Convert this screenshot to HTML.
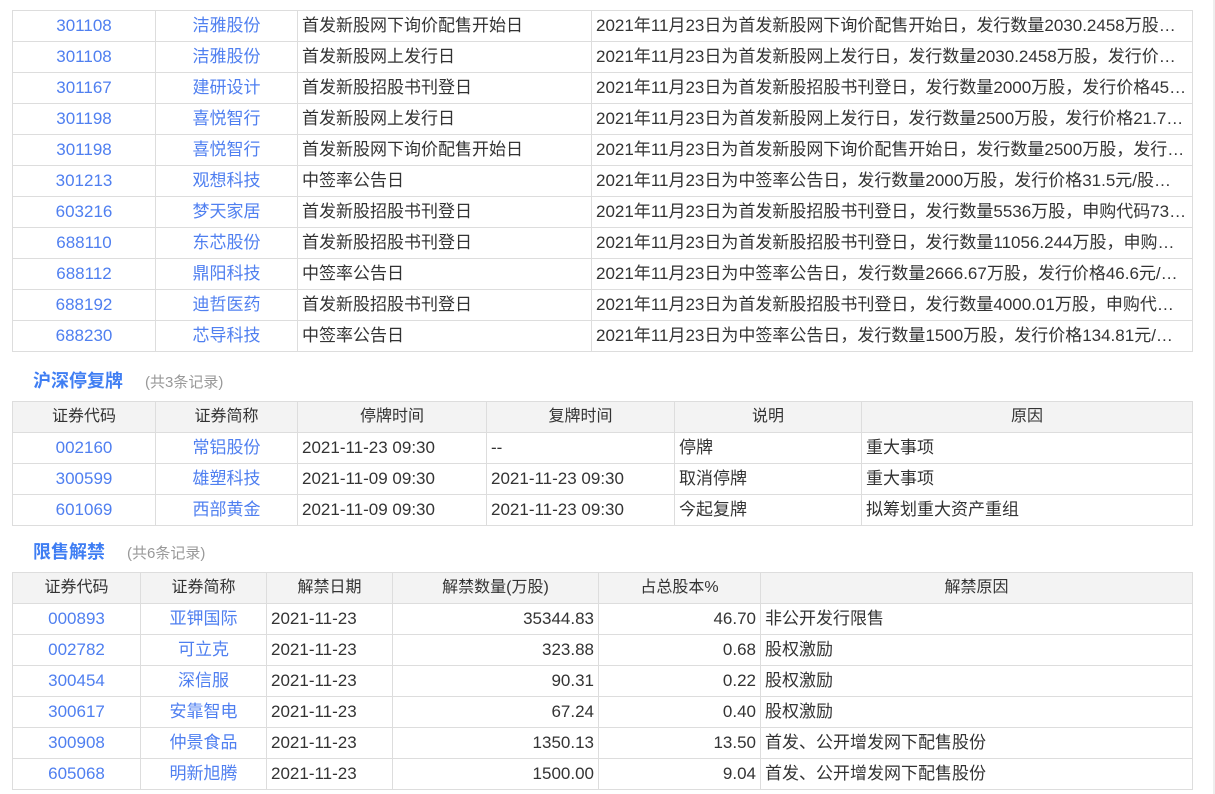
<!DOCTYPE html>
<html><head><meta charset="utf-8"><style>
body{margin:0;background:#fff;font-family:"Liberation Sans","Noto Sans CJK SC",sans-serif;font-size:17px;color:#333;width:1215px;height:794px;overflow:hidden;position:relative}
table{position:absolute;left:12px;border-collapse:collapse;table-layout:fixed;width:1181px}
td,th{border:1px solid #ddd;height:30px;line-height:30px;padding:0 4px;white-space:nowrap;overflow:hidden;text-overflow:ellipsis;font-weight:normal;vertical-align:middle}
th{background:#f3f3f3;color:#333;font-size:16px}
.c{text-align:center}.r{text-align:right}
.a{color:#4f7ff0;text-align:center}
.t{position:absolute;left:33px;font-size:18px;font-weight:bold;color:#3f7ef3}
.t span{font-size:15px;font-weight:normal;color:#999;margin-left:22px}
.edge{position:absolute;right:0;top:0;width:2px;height:794px;background:#eee}
</style></head><body>
<table style="top:10px">
<colgroup><col style="width:143px"><col style="width:142px"><col style="width:294px"><col></colgroup>
<tr><td class="a">301108</td><td class="a">洁雅股份</td><td>首发新股网下询价配售开始日</td><td>2021年11月23日为首发新股网下询价配售开始日，发行数量2030.2458万股，发行价格46.30元</td></tr>
<tr><td class="a">301108</td><td class="a">洁雅股份</td><td>首发新股网上发行日</td><td>2021年11月23日为首发新股网上发行日，发行数量2030.2458万股，发行价格46.30元</td></tr>
<tr><td class="a">301167</td><td class="a">建研设计</td><td>首发新股招股书刊登日</td><td>2021年11月23日为首发新股招股书刊登日，发行数量2000万股，发行价格45.60元</td></tr>
<tr><td class="a">301198</td><td class="a">喜悦智行</td><td>首发新股网上发行日</td><td>2021年11月23日为首发新股网上发行日，发行数量2500万股，发行价格21.73元/股</td></tr>
<tr><td class="a">301198</td><td class="a">喜悦智行</td><td>首发新股网下询价配售开始日</td><td>2021年11月23日为首发新股网下询价配售开始日，发行数量2500万股，发行价格21.73元</td></tr>
<tr><td class="a">301213</td><td class="a">观想科技</td><td>中签率公告日</td><td>2021年11月23日为中签率公告日，发行数量2000万股，发行价格31.5元/股，中签率</td></tr>
<tr><td class="a">603216</td><td class="a">梦天家居</td><td>首发新股招股书刊登日</td><td>2021年11月23日为首发新股招股书刊登日，发行数量5536万股，申购代码732216</td></tr>
<tr><td class="a">688110</td><td class="a">东芯股份</td><td>首发新股招股书刊登日</td><td>2021年11月23日为首发新股招股书刊登日，发行数量11056.244万股，申购代码787110</td></tr>
<tr><td class="a">688112</td><td class="a">鼎阳科技</td><td>中签率公告日</td><td>2021年11月23日为中签率公告日，发行数量2666.67万股，发行价格46.6元/股，中签率</td></tr>
<tr><td class="a">688192</td><td class="a">迪哲医药</td><td>首发新股招股书刊登日</td><td>2021年11月23日为首发新股招股书刊登日，发行数量4000.01万股，申购代码787192</td></tr>
<tr><td class="a">688230</td><td class="a">芯导科技</td><td>中签率公告日</td><td>2021年11月23日为中签率公告日，发行数量1500万股，发行价格134.81元/股，中签率</td></tr>
</table>
<div class="t" style="top:367px">沪深停复牌<span>(共3条记录)</span></div>
<table style="top:401px">
<colgroup><col style="width:143px"><col style="width:142px"><col style="width:189px"><col style="width:188px"><col style="width:187px"><col></colgroup>
<tr><th>证券代码</th><th>证券简称</th><th>停牌时间</th><th>复牌时间</th><th>说明</th><th>原因</th></tr>
<tr><td class="a">002160</td><td class="a">常铝股份</td><td>2021-11-23 09:30</td><td>--</td><td>停牌</td><td>重大事项</td></tr>
<tr><td class="a">300599</td><td class="a">雄塑科技</td><td>2021-11-09 09:30</td><td>2021-11-23 09:30</td><td>取消停牌</td><td>重大事项</td></tr>
<tr><td class="a">601069</td><td class="a">西部黄金</td><td>2021-11-09 09:30</td><td>2021-11-23 09:30</td><td>今起复牌</td><td>拟筹划重大资产重组</td></tr>
</table>
<div class="t" style="top:538px">限售解禁<span>(共6条记录)</span></div>
<table style="top:572px">
<colgroup><col style="width:128px"><col style="width:126px"><col style="width:126px"><col style="width:206px"><col style="width:162px"><col></colgroup>
<tr><th>证券代码</th><th>证券简称</th><th>解禁日期</th><th>解禁数量(万股)</th><th>占总股本%</th><th>解禁原因</th></tr>
<tr><td class="a">000893</td><td class="a">亚钾国际</td><td>2021-11-23</td><td class="r">35344.83</td><td class="r">46.70</td><td>非公开发行限售</td></tr>
<tr><td class="a">002782</td><td class="a">可立克</td><td>2021-11-23</td><td class="r">323.88</td><td class="r">0.68</td><td>股权激励</td></tr>
<tr><td class="a">300454</td><td class="a">深信服</td><td>2021-11-23</td><td class="r">90.31</td><td class="r">0.22</td><td>股权激励</td></tr>
<tr><td class="a">300617</td><td class="a">安靠智电</td><td>2021-11-23</td><td class="r">67.24</td><td class="r">0.40</td><td>股权激励</td></tr>
<tr><td class="a">300908</td><td class="a">仲景食品</td><td>2021-11-23</td><td class="r">1350.13</td><td class="r">13.50</td><td>首发、公开增发网下配售股份</td></tr>
<tr><td class="a">605068</td><td class="a">明新旭腾</td><td>2021-11-23</td><td class="r">1500.00</td><td class="r">9.04</td><td>首发、公开增发网下配售股份</td></tr>
</table>
<div class="edge"></div>
</body></html>
